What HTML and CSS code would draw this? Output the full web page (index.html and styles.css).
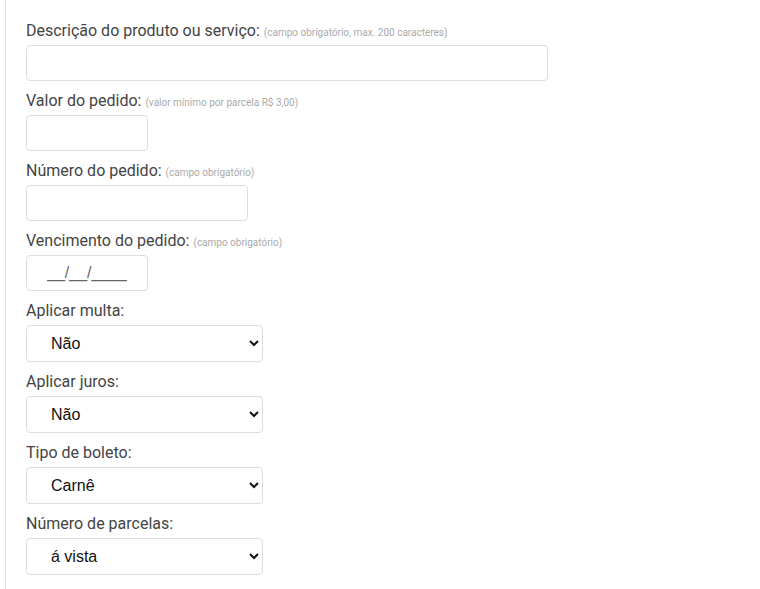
FILE: index.html
```html
<!DOCTYPE html>
<html lang="pt-BR">
<head>
  <meta charset="UTF-8" />
  <meta name="viewport" content="width=device-width, initial-scale=1" />
  <title>Boleto</title>
  <link rel="stylesheet" href="styles.css">
</head>
<body>

  <div class="panel">
    <form class="boleto-form">
      <div class="field">
        <label for="descricao">Descrição do produto ou serviço: <small>(campo obrigatório, max. 200 caracteres)</small></label>
        <input type="text" id="descricao" class="text-input input-wide" maxlength="200" />
      </div>
      <div class="field">
        <label for="valor">Valor do pedido: <small>(valor mínimo por parcela R$ 3,00)</small></label>
        <input type="text" id="valor" class="text-input input-short" />
      </div>
      <div class="field">
        <label for="numero">Número do pedido: <small>(campo obrigatório)</small></label>
        <input type="text" id="numero" class="text-input input-mid" />
      </div>
      <div class="field">
        <label for="vencimento">Vencimento do pedido: <small>(campo obrigatório)</small></label>
        <input type="text" id="vencimento" class="text-input input-short input-date" placeholder="__/__/____" />
      </div>
      <div class="field">
        <label for="multa">Aplicar multa:</label>
        <select id="multa" class="select-input">
          <option>Não</option>
          <option>Sim</option>
        </select>
      </div>
      <div class="field">
        <label for="juros">Aplicar juros:</label>
        <select id="juros" class="select-input">
          <option>Não</option>
          <option>Sim</option>
        </select>
      </div>
      <div class="field">
        <label for="tipo">Tipo de boleto:</label>
        <select id="tipo" class="select-input">
          <option>Carnê</option>
          <option>Avulso</option>
        </select>
      </div>
      <div class="field">
        <label for="parcelas">Número de parcelas:</label>
        <select id="parcelas" class="select-input">
          <option>á vista</option>
          <option>2x</option>
          <option>3x</option>
          <option>4x</option>
        </select>
      </div>
    </form>
  </div>

</body>
</html>
```

FILE: styles.css
```css
html, body {
  margin: 0;
  padding: 0;
  height: 100%;
  background: #fff;
}
body {
  font-family: Roboto, "Noto Sans", Arial, sans-serif;
  color: #444;
}
.panel {
  margin-left: 5px;
  border-left: 1px solid #e2e2e2;
  min-height: 100%;
  padding: 20px 0 0 20px;
  box-sizing: border-box;
}
.boleto-form {
  display: flex;
  flex-direction: column;
}
.field {
  display: flex;
  flex-direction: column;
  align-items: flex-start;
  margin-bottom: 9px;
}
.field label {
  font-size: 16px;
  line-height: 22px;
  margin-bottom: 3px;
}
.field label small {
  font-size: 10px;
  line-height: 1;
  color: #aaa;
}
.text-input {
  height: 36px;
  box-sizing: border-box;
  border: 1px solid #ddd;
  border-radius: 4px;
  background: #fff;
  font-family: "Liberation Sans", Arial, sans-serif;
  font-size: 16px;
  padding: 0 20px;
  color: #222;
}
.input-wide { width: 522px; }
.input-mid { width: 222px; }
.input-short { width: 122px; }
.input-date::placeholder {
  color: #666;
}
.select-input {
  width: 237px;
  height: 37px;
  box-sizing: border-box;
  border: 1px solid #ddd;
  border-radius: 4px;
  background: #fff;
  font-family: "Liberation Sans", Arial, sans-serif;
  font-size: 16px;
  color: #111;
  padding: 0 8px 0 20px;
}
```
